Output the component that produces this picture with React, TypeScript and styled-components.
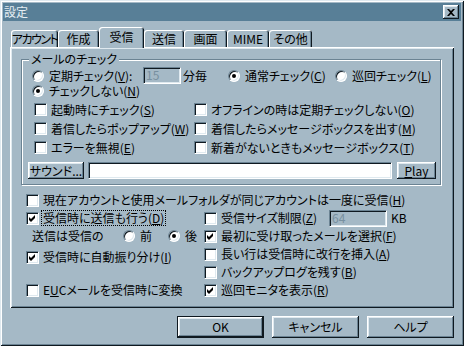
import React from 'react';
import styled, { createGlobalStyle } from 'styled-components';

const FACE = '#a5b9c6';
const LIGHT = '#dfe9ef';
const WHITE = '#ffffff';
const SHADOW = '#6b8393';
const DARK = '#0f1920';
const TITLE = '#587f97';
const GRAY_TEXT = '#7890a0';

const GlobalStyle = createGlobalStyle`
  html, body {
    margin: 0;
    background: ${FACE};
  }
  body {
    font-family: "Noto Sans CJK JP", "Noto Sans", sans-serif;
    font-size: 12px;
    font-feature-settings: "palt" 1;
    color: #000;
  }
`;

const raised = `
  box-shadow: inset -1px -1px 0 ${DARK}, inset 1px 1px 0 ${WHITE},
    inset -2px -2px 0 ${SHADOW}, inset 2px 2px 0 ${LIGHT};
`;

const sunken = `
  border: 1px solid;
  border-color: ${SHADOW} ${WHITE} ${WHITE} ${SHADOW};
  box-shadow: inset 1px 1px 0 ${DARK}, inset -1px -1px 0 ${LIGHT};
`;

const Window = styled.div`
  width: 464px;
  height: 346px;
  box-sizing: border-box;
  padding: 3px;
  background: ${FACE};
  box-shadow: inset 1px 1px 0 ${LIGHT}, inset -1px -1px 0 ${DARK},
    inset 2px 2px 0 ${WHITE}, inset -2px -2px 0 ${SHADOW};
`;

const TitleBar = styled.div`
  height: 18px;
  display: flex;
  align-items: center;
  justify-content: space-between;
  padding: 0 2px 0 1px;
  background: ${TITLE};
  color: #e6eef3;
  line-height: 18px;
`;

const CloseButton = styled.div`
  width: 16px;
  height: 14px;
  display: flex;
  align-items: center;
  justify-content: center;
  background: ${FACE};
  ${raised}
`;

const Body = styled.div`
  padding: 0 7px;
`;

const TabStrip = styled.div`
  margin-top: 6px;
  height: 20px;
  display: flex;
  align-items: flex-end;
  padding-left: 1px;
`;

const Tab = styled.div<{ $w: number; $active?: boolean; $tight?: boolean }>`
  width: ${(p) => p.$w}px;
  height: ${(p) => (p.$active ? 21 : 17)}px;
  margin-bottom: ${(p) => (p.$active ? -1 : 0)}px;
  position: relative;
  z-index: ${(p) => (p.$active ? 1 : 0)};
  box-sizing: border-box;
  display: flex;
  align-items: center;
  justify-content: center;
  padding-bottom: ${(p) => (p.$active ? 2 : 0)}px;
  background: ${FACE};
  border-radius: 3px 3px 0 0;
  box-shadow: inset 1px 1px 0 ${WHITE}, inset -1px 0 0 ${DARK},
    inset -2px 0 0 ${SHADOW};
  line-height: 14px;
  white-space: nowrap;
  letter-spacing: ${(p) => (p.$tight ? '-1.5px' : '0')};
`;

const Panel = styled.div`
  width: 444px;
  height: 261px;
  box-sizing: border-box;
  padding: 12px 0 0 11px;
  box-shadow: inset 1px 1px 0 ${WHITE}, inset -1px -1px 0 ${DARK},
    inset 2px 2px 0 ${LIGHT}, inset -2px -2px 0 ${SHADOW};
`;

const GroupBox = styled.div`
  width: 420px;
  box-sizing: border-box;
  border: 1px solid ${SHADOW};
  box-shadow: inset 1px 1px 0 ${WHITE}, 1px 1px 0 ${WHITE};
  padding: 0 0 5px 6px;
`;

const GroupLabel = styled.div`
  width: fit-content;
  margin: -8px 0 0 1px;
  padding: 0 2px;
  height: 14px;
  line-height: 14px;
  background: ${FACE};
`;

const CheckRow = styled.div`
  margin-top: 1px;
  height: 17px;
  padding-left: 4px;
  display: grid;
  grid-template-columns: 111px 40px 45px 107px auto;
  align-items: center;
`;

const SingleRow = styled.div`
  height: 14px;
  padding-left: 4px;
  display: flex;
  align-items: center;
`;

const OptionGrid = styled.div`
  margin-top: 2px;
  padding-left: 6px;
  display: grid;
  grid-template-columns: 160px auto;
  grid-auto-rows: 19px;
  align-items: center;
`;

const SoundRow = styled.div`
  margin-top: 5px;
  height: 17px;
  display: flex;
  align-items: stretch;
`;

const Button = styled.div<{ $w: number; $default?: boolean }>`
  width: ${(p) => p.$w}px;
  box-sizing: border-box;
  display: flex;
  align-items: center;
  justify-content: center;
  background: ${FACE};
  line-height: 14px;
  border: ${(p) => (p.$default ? `1px solid ${DARK}` : 'none')};
  ${raised}
`;

const TextField = styled.div<{ $w: number; $disabled?: boolean }>`
  width: ${(p) => p.$w}px;
  height: 17px;
  box-sizing: border-box;
  background: ${(p) => (p.$disabled ? FACE : WHITE)};
  color: ${GRAY_TEXT};
  line-height: 14px;
  padding-left: 2px;
  ${sunken}
`;

const Lower = styled.div`
  margin: 6px 0 0 5px;
  display: grid;
  grid-template-columns: 178px auto;
  grid-auto-rows: 18px;
  align-items: center;
`;

const Wide = styled.div`
  grid-column: 1 / span 2;
  display: flex;
  align-items: center;
`;

const Cell = styled.div<{ $shift?: number }>`
  display: flex;
  align-items: center;
  margin-top: ${(p) => p.$shift || 0}px;
`;

const Item = styled.div<{ $w?: number }>`
  display: flex;
  align-items: center;
  width: ${(p) => (p.$w ? `${p.$w}px` : 'auto')};
  white-space: nowrap;
`;

const Label = styled.span<{ $focus?: boolean }>`
  line-height: 14px;
  white-space: nowrap;
  padding: 0 1px;
  outline: ${(p) => (p.$focus ? '1px dotted #000' : 'none')};
`;

const Plain = styled.span<{ $w?: number; $pad?: number }>`
  display: inline-block;
  width: ${(p) => (p.$w ? `${p.$w}px` : 'auto')};
  padding-left: ${(p) => p.$pad || 0}px;
  line-height: 14px;
  white-space: nowrap;
`;

const Box = styled.span`
  width: 13px;
  height: 13px;
  flex: none;
  box-sizing: border-box;
  margin-right: 3px;
  display: flex;
  align-items: center;
  justify-content: center;
  background: ${WHITE};
  ${sunken}
`;

const Circle = styled(Box)`
  width: 12px;
  height: 12px;
  border-radius: 50%;
  margin-right: 4px;
`;

const Dot = styled.span`
  width: 4px;
  height: 4px;
  border-radius: 50%;
  background: #000;
`;

const ButtonRow = styled.div`
  margin-top: 8px;
  display: flex;
  justify-content: flex-end;
  gap: 8px;
  height: 22px;
`;

const Check = ({ checked }: { checked?: boolean }) => (
  <Box>
    {checked && (
      <svg width="7" height="7" viewBox="0 0 7 7">
        <path d="M0 2L2 4L6 0V3L2 7L0 5Z" fill="#000" />
      </svg>
    )}
  </Box>
);

const CheckItem = ({
  checked,
  focus,
  w,
  children,
}: {
  checked?: boolean;
  focus?: boolean;
  w?: number;
  children: React.ReactNode;
}) => (
  <Item $w={w}>
    <Check checked={checked} />
    <Label $focus={focus}>{children}</Label>
  </Item>
);

const RadioItem = ({
  checked,
  w,
  children,
}: {
  checked?: boolean;
  w?: number;
  children: React.ReactNode;
}) => (
  <Item $w={w}>
    <Circle>{checked && <Dot />}</Circle>
    <Label>{children}</Label>
  </Item>
);

const tabs: [string, number][] = [
  ['アカウント', 47],
  ['作成', 41],
  ['受信', 45],
  ['送信', 40],
  ['画面', 43],
  ['MIME', 42],
  ['その他', 43],
];

export default function App() {
  return (
    <>
      <GlobalStyle />
      <Window>
        <TitleBar>
          <span>設定</span>
          <CloseButton>
            <svg width="8" height="7" viewBox="0 0 8 7">
              <path d="M0 0h2l2 2 2-2h2L5 3.5 8 7H6L4 5 2 7H0l3-3.5z" fill="#000" />
            </svg>
          </CloseButton>
        </TitleBar>
        <Body>
          <TabStrip>
            {tabs.map(([name, w]) => (
              <Tab
                key={name}
                $w={w}
                $active={name === '受信'}
                $tight={name === 'アカウント'}
              >
                {name}
              </Tab>
            ))}
          </TabStrip>
          <Panel>
            <GroupBox>
              <GroupLabel>メールのチェック</GroupLabel>
              <CheckRow>
                <RadioItem>
                  定期チェック(<u>V</u>):
                </RadioItem>
                <TextField $w={38} $disabled>
                  15
                </TextField>
                <Plain>分毎</Plain>
                <RadioItem checked>
                  通常チェック(<u>C</u>)
                </RadioItem>
                <RadioItem>
                  巡回チェック(<u>L</u>)
                </RadioItem>
              </CheckRow>
              <SingleRow>
                <RadioItem checked>
                  チェックしない(<u>N</u>)
                </RadioItem>
              </SingleRow>
              <OptionGrid>
                <CheckItem>
                  起動時にチェック(<u>S</u>)
                </CheckItem>
                <CheckItem>
                  オフラインの時は定期チェックしない(<u>O</u>)
                </CheckItem>
                <CheckItem>
                  着信したらポップアップ(<u>W</u>)
                </CheckItem>
                <CheckItem>
                  着信したらメッセージボックスを出す(<u>M</u>)
                </CheckItem>
                <CheckItem>
                  エラーを無視(<u>E</u>)
                </CheckItem>
                <CheckItem>
                  新着がないときもメッセージボックス(<u>T</u>)
                </CheckItem>
              </OptionGrid>
              <SoundRow>
                <Button $w={56}>サウンド...</Button>
                <TextField $w={304} style={{ marginLeft: 4 }} />
                <Button $w={39} style={{ marginLeft: 5 }}>
                  <u>P</u>lay
                </Button>
              </SoundRow>
            </GroupBox>
            <Lower>
              <Wide>
                <CheckItem>
                  現在アカウントと使用メールフォルダが同じアカウントは一度に受信(<u>H</u>)
                </CheckItem>
              </Wide>
              <Cell>
                <CheckItem checked focus>
                  受信時に送信も行う(<u>D</u>)
                </CheckItem>
              </Cell>
              <Cell>
                <CheckItem w={125}>
                  受信サイズ制限(<u>Z</u>)
                </CheckItem>
                <TextField $w={58} $disabled>
                  64
                </TextField>
                <Plain $pad={4}>KB</Plain>
              </Cell>
              <Cell>
                <Plain $w={91} $pad={6}>
                  送信は受信の
                </Plain>
                <RadioItem w={45}>前</RadioItem>
                <RadioItem checked>後</RadioItem>
              </Cell>
              <Cell>
                <CheckItem checked>
                  最初に受け取ったメールを選択(<u>F</u>)
                </CheckItem>
              </Cell>
              <Cell $shift={6}>
                <CheckItem checked>
                  受信時に自動振り分け(<u>I</u>)
                </CheckItem>
              </Cell>
              <Cell>
                <CheckItem>
                  長い行は受信時に改行を挿入(<u>A</u>)
                </CheckItem>
              </Cell>
              <Cell />
              <Cell>
                <CheckItem>
                  バックアップログを残す(<u>B</u>)
                </CheckItem>
              </Cell>
              <Cell>
                <CheckItem>
                  E<u>U</u>Cメールを受信時に変換
                </CheckItem>
              </Cell>
              <Cell>
                <CheckItem checked>
                  巡回モニタを表示(<u>R</u>)
                </CheckItem>
              </Cell>
            </Lower>
          </Panel>
          <ButtonRow>
            <Button $w={87} $default>
              OK
            </Button>
            <Button $w={87}>キャンセル</Button>
            <Button $w={87}>ヘルプ</Button>
          </ButtonRow>
        </Body>
      </Window>
    </>
  );
}
